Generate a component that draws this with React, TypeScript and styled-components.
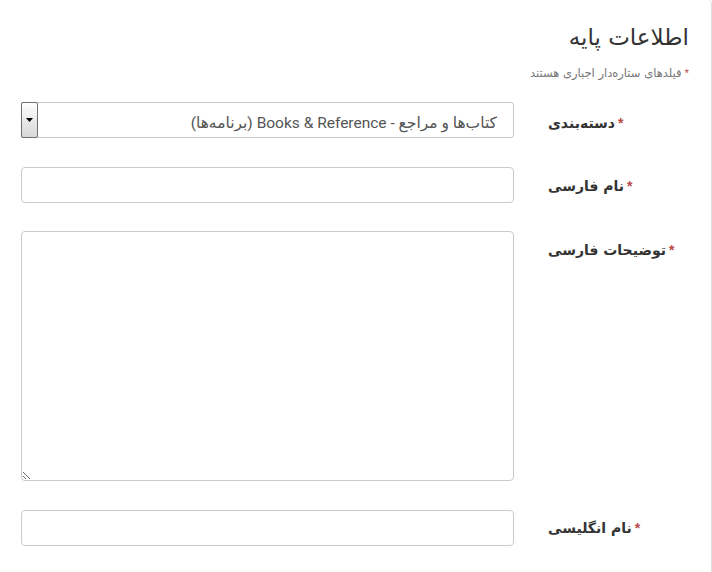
import React from "react";
import styled, { createGlobalStyle } from "styled-components";

const Global = createGlobalStyle`
  html, body { margin: 0; padding: 0; background: #fff; }
  body { font-family: Roboto, "DejaVu Sans", sans-serif; color: #333; }
  * { box-sizing: border-box; }
`;

const Page = styled.div`
  direction: rtl;
  width: 712px;
  height: 572px;
  border-right: 1px solid #dddddd;
  border-top-right-radius: 4px;
  overflow: hidden;
`;

const Header = styled.div`
  padding: 23px 22px 0 0;
`;

const Title = styled.h3`
  margin: 0;
  font-family: "DejaVu Sans", sans-serif;
  font-weight: normal;
  font-size: 23px;
  line-height: 28px;
  color: #333;
`;

const Note = styled.p`
  margin: 14px 0 0 0;
  font-family: "DejaVu Sans", sans-serif;
  font-size: 11.5px;
  line-height: 16px;
  color: #777;
`;

const Star = styled.span`
  color: #b94a48;
  margin-left: 3px;
  font-family: "Liberation Sans", sans-serif;
`;

const Form = styled.div`
  margin-top: 21px;
`;

const Row = styled.div<{ $gap?: number }>`
  display: grid;
  grid-template-columns: 1fr 493px;
  padding-left: 21px;
  margin-bottom: ${(p) => p.$gap ?? 29}px;
`;

const Label = styled.label<{ $offset?: number }>`
  text-align: left;
  padding-left: 34px;
  padding-top: ${(p) => p.$offset ?? 9}px;
  font-family: "DejaVu Sans", sans-serif;
  font-weight: bold;
  font-size: 14px;
  line-height: 20px;
  color: #333;
`;

const Input = styled.input`
  display: block;
  width: 100%;
  height: 36px;
  border: 1px solid #cccccc;
  border-radius: 4px;
  background: #fff;
  padding: 6px 12px;
  font-size: 14px;
  outline: none;
`;

const TextArea = styled.textarea`
  display: block;
  width: 100%;
  height: 250px;
  border: 1px solid #cccccc;
  border-radius: 4px;
  background: #fff;
  padding: 6px 12px;
  font-size: 14px;
  outline: none;
  resize: vertical;
`;

const SelectBox = styled.div`
  display: flex;
  direction: ltr;
  height: 36px;
  border: 1px solid #cccccc;
  border-left: none;
  border-radius: 0 4px 4px 0;
  background: #fff;
`;

const ArrowButton = styled.div`
  width: 17px;
  height: 36px;
  margin-top: -1px;
  border: 1px solid #707070;
  border-radius: 2px;
  background: linear-gradient(#ffffff, #e6e6e6 60%, #d8d8d8);
  display: flex;
  align-items: center;
  justify-content: center;
`;

const SelectValue = styled.div`
  flex: 1;
  direction: rtl;
  text-align: right;
  padding: 6px 16px 0 8px;
  font-family: Roboto, "DejaVu Sans", sans-serif;
  font-size: 15.5px;
  line-height: 28px;
  color: #555;
  white-space: nowrap;
`;

const Field: React.FC<{
  label: string;
  children: React.ReactNode;
  gap?: number;
  offset?: number;
}> = ({ label, children, gap, offset }) => (
  <Row $gap={gap}>
    <Label $offset={offset}>
      <Star>*</Star>
      {label}
    </Label>
    <div>{children}</div>
  </Row>
);

export default function App() {
  return (
    <>
      <Global />
      <Page>
        <Header>
          <Title>اطلاعات پایه</Title>
          <Note>
            <Star>*</Star>
            فیلدهای ستاره‌دار اجباری هستند
          </Note>
        </Header>
        <Form>
          <Field label="دسته‌بندی" offset={11}>
            <SelectBox>
              <ArrowButton>
                <svg width="7" height="4" viewBox="0 0 7 4">
                  <path d="M0 0 H7 L3.5 4 Z" fill="#000" />
                </svg>
              </ArrowButton>
              <SelectValue>کتاب‌ها و مراجع - Books &amp; Reference (برنامه‌ها)</SelectValue>
            </SelectBox>
          </Field>
          <Field label="نام فارسی" gap={28}>
            <Input type="text" />
          </Field>
          <Field label="توضیحات فارسی">
            <TextArea />
          </Field>
          <Field label="نام انگلیسی" offset={8}>
            <Input type="text" />
          </Field>
        </Form>
      </Page>
    </>
  );
}
